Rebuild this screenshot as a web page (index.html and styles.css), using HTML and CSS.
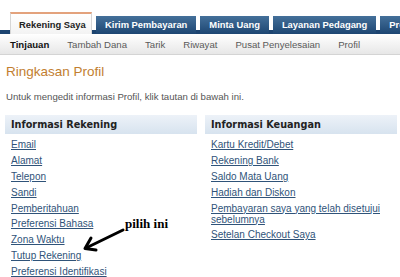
FILE: index.html
```html
<!DOCTYPE html>
<html lang="id">
<head>
    <meta charset="UTF-8">
    <title>Ringkasan Profil</title>
    <link rel="stylesheet" href="styles.css">
</head>
<body>

    <!-- Tab utama -->
    <nav class="tabs">
        <span class="tab active">Rekening Saya</span>
        <span class="tab">Kirim Pembayaran</span>
        <span class="tab">Minta Uang</span>
        <span class="tab">Layanan Pedagang</span>
        <span class="tab">Produk &amp; Layanan</span>
    </nav>

    <div class="subnav">
        <span class="current">Tinjauan</span>
        <span>Tambah Dana</span>
        <span>Tarik</span>
        <span>Riwayat</span>
        <span>Pusat Penyelesaian</span>
        <span>Profil</span>
    </div>

    <main class="content">
        <h1>Ringkasan Profil</h1>
        <p class="intro">Untuk mengedit informasi Profil, klik tautan di bawah ini.</p>

        <div class="columns">
            <section class="box">
                <h2>Informasi Rekening</h2>
                <ul>
                    <li><a href="#">Email</a></li>
                    <li><a href="#">Alamat</a></li>
                    <li><a href="#">Telepon</a></li>
                    <li><a href="#">Sandi</a></li>
                    <li><a href="#">Pemberitahuan</a></li>
                    <li><a href="#">Preferensi Bahasa</a></li>
                    <li><a href="#">Zona Waktu</a></li>
                    <li><a href="#">Tutup Rekening</a></li>
                    <li><a href="#">Preferensi Identifikasi</a></li>
                </ul>
            </section>

            <section class="box">
                <h2>Informasi Keuangan</h2>
                <ul>
                    <li><a href="#">Kartu Kredit/Debet</a></li>
                    <li><a href="#">Rekening Bank</a></li>
                    <li><a href="#">Saldo Mata Uang</a></li>
                    <li><a href="#">Hadiah dan Diskon</a></li>
                    <li><a href="#">Pembayaran saya yang telah disetujui sebelumnya</a></li>
                    <li><a href="#">Setelan Checkout Saya</a></li>
                </ul>
            </section>
        </div>
    </main>

    <!-- catatan tangan di atas screenshot -->
    <div class="note">pilih ini</div>
    <svg class="arrow" width="60" height="40" viewBox="80 225 60 40">
        <path d="M123 230 L86 248" stroke="#000" stroke-width="3" stroke-linecap="round" fill="none"/>
        <path d="M91 238 L85 248.5 L96 250" stroke="#000" stroke-width="3" stroke-linecap="round" stroke-linejoin="round" fill="none"/>
    </svg>

</body>
</html>
```

FILE: styles.css
```css
body {
    margin: 0;
    font-family: "Liberation Sans", Arial, sans-serif;
    background: #fff;
    color: #555;
    position: relative;
    width: 400px;
    height: 277px;
    overflow: hidden;
}

.tabs {
    display: flex;
    align-items: flex-end;
    gap: 4px;
    height: 34px;
    padding-left: 10px;
    background: linear-gradient(to top, #1c4470 4px, transparent 4px);
    white-space: nowrap;
    overflow: hidden;
}

.tab {
    height: 18px;
    line-height: 18px;
    padding: 0 9px;
    font-size: 9.4px;
    font-weight: bold;
    color: #fff;
    background: linear-gradient(#44709a, #1d4672);
    flex-shrink: 0;
}

.tab.active {
    height: 20px;
    line-height: 21px;
    padding: 0 8px;
    color: #222;
    background: linear-gradient(#fff, #f3f3f3);
    border-top: 2px solid #e3a27c;
    border-left: 1px solid #d6d6d6;
    border-right: 1px solid #d6d6d6;
    width: 64px;
}

.subnav {
    display: flex;
    height: 20px;
    align-items: center;
    padding-left: 1px;
    background: linear-gradient(#fff, #e7e7e7);
    border-bottom: 1px solid #d4d4d4;
    font-size: 9.6px;
    white-space: nowrap;
}

.subnav span {
    padding: 0 9px;
    color: #5a5a5a;
}

.subnav .current {
    font-weight: bold;
    color: #111;
}

.content {
    padding: 0 3px 0 5px;
}

h1 {
    margin: 9px 0 0 1px;
    font-size: 13.5px;
    font-weight: normal;
    color: #c27e30;
    line-height: 16px;
}

.intro {
    margin: 11px 0 0 1px;
    font-size: 9.6px;
    line-height: 12px;
    color: #555;
}

.columns {
    display: grid;
    grid-template-columns: 192px 192px;
    gap: 8px;
    margin-top: 12px;
}

.box h2 {
    margin: 0;
    height: 19px;
    line-height: 19px;
    padding-left: 6px;
    font-family: "DejaVu Sans", Verdana, sans-serif;
    font-size: 9.7px;
    font-weight: bold;
    color: #222;
    background: linear-gradient(#edf2f8, #d7e3ef);
}

.box ul {
    list-style: none;
    margin: 5px 0 0;
    padding: 0 8px 0 6px;
}

.box li {
    font-size: 10px;
    line-height: 11px;
    margin-bottom: 4.9px;
}

.box a {
    color: #2f5379;
}

.note {
    position: absolute;
    left: 125px;
    top: 216px;
    font-family: "Liberation Serif", "Times New Roman", serif;
    font-size: 13px;
    font-weight: bold;
    color: #000;
}

.arrow {
    position: absolute;
    left: 80px;
    top: 225px;
}
```
